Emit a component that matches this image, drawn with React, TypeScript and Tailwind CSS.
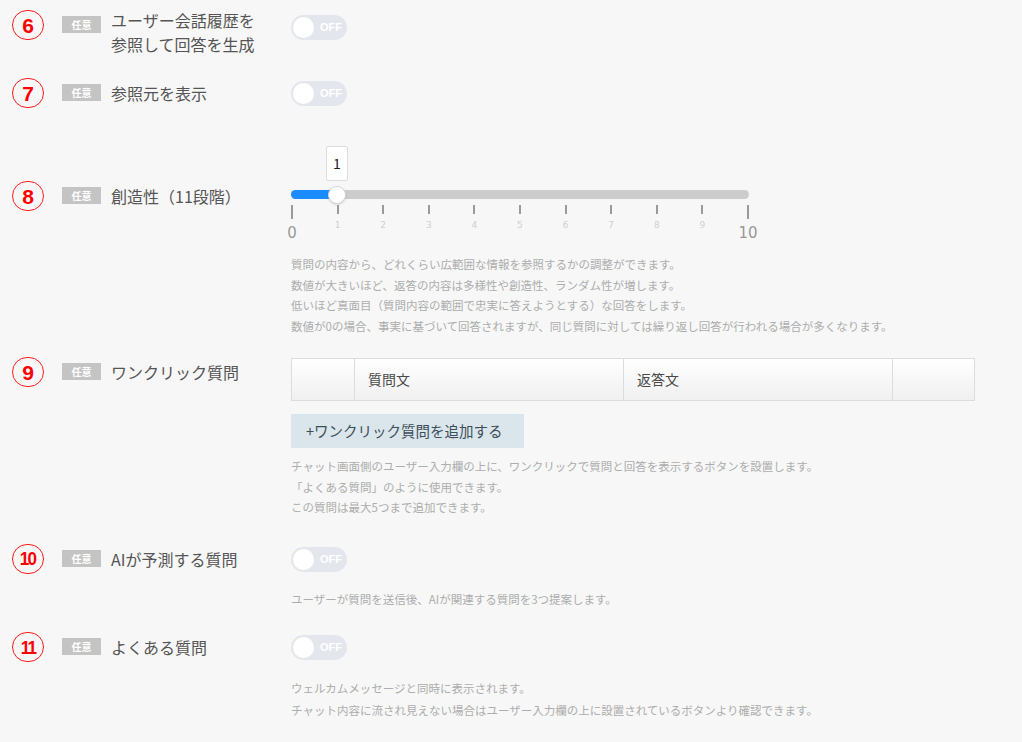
import React from 'react';

const FONT = { fontFamily: '"Noto Sans CJK JP", "Noto Sans", "Liberation Sans", sans-serif' };

const Num = ({ n }: { n: number }) => (
  <div className="w-[32px] h-[30px] flex-shrink-0 rounded-full border-[1.5px] border-[#ff1a1a] flex items-center justify-center">
    <span
      className={`font-bold text-[#ff0000] leading-none ${n >= 10 ? 'text-[19px] tracking-[-2px] scale-x-90' : 'text-[21px]'}`}
      style={{ fontFamily: '"Liberation Sans", Arial, sans-serif' }}
    >
      {n}
    </span>
  </div>
);

const Head = ({ n, label, multi }: { n: number; label: React.ReactNode; multi?: boolean }) => (
  <div className="flex items-start w-[279px] flex-shrink-0">
    <Num n={n} />
    <span className="ml-[18px] mt-[6px] w-[39px] h-[17px] bg-[#c4c4c4] text-white text-[10px] font-bold flex items-center justify-center flex-shrink-0">
      任意
    </span>
    <div className={`ml-[10px] text-[16px] text-[#555] ${multi ? '-mt-[2px] leading-[24px]' : 'mt-[4px] leading-[22px]'}`}>{label}</div>
  </div>
);

const Toggle = () => (
  <div className="w-[56px] h-[25px] rounded-full bg-[#e4e6ed] flex items-center pl-[2px] pr-[5px] justify-between">
    <div className="w-[21px] h-[21px] rounded-full bg-white" />
    <span className="text-white text-[11px] font-bold" style={{ fontFamily: '"Liberation Sans", Arial, sans-serif' }}>
      OFF
    </span>
  </div>
);

const Desc = ({ lines, lh = 'leading-[20.5px]' }: { lines: string[]; lh?: string }) => (
  <div className={`text-[11.5px] text-[#adadad] ${lh}`}>
    {lines.map((l) => (
      <div key={l}>{l}</div>
    ))}
  </div>
);

const Slider = ({ value }: { value: number }) => {
  const pct = (value / 10) * 100;
  return (
    <div className="w-[458px] relative">
      <div className="relative h-[40px]">
        <div
          className="absolute top-0 w-[22px] h-[35px] -translate-x-1/2 bg-white border border-[#ddd] rounded-[2px] flex items-center justify-center text-[14px] text-[#222]"
          style={{ left: `${pct}%` }}
        >
          {value}
        </div>
      </div>
      <div className="relative h-[18px]">
        <div className="absolute left-0 right-0 top-[4px] h-[9px] rounded-full bg-[#cccccc]" />
        <div className="absolute left-0 top-[4px] h-[9px] rounded-l-full bg-[#1a8cff]" style={{ width: `${pct}%` }} />
        <div
          className="absolute top-0 w-[18px] h-[18px] -translate-x-1/2 rounded-full bg-white border border-[#d6d6d6] shadow-sm"
          style={{ left: `${pct}%` }}
        />
      </div>
      <div className="flex justify-between px-[1px] pt-[1px]">
        {Array.from({ length: 11 }, (_, i) => {
          const end = i === 0 || i === 10;
          return (
            <div key={i} className="w-0 flex flex-col items-center">
              <div className={`w-[2px] bg-[#9a9a9a] ${end ? 'h-[14px]' : 'h-[9px]'}`} />
              {end ? (
                <span className="mt-[6px] text-[15px] leading-[16px] text-[#999]" style={{ fontFamily: '"DejaVu Sans", sans-serif' }}>
                  {i}
                </span>
              ) : (
                <span className="mt-[6px] text-[9px] leading-[10px] text-[#cfcfcf]" style={{ fontFamily: '"DejaVu Sans", sans-serif' }}>
                  {i}
                </span>
              )}
            </div>
          );
        })}
      </div>
    </div>
  );
};

export default function App() {
  return (
    <div className="w-[1022px] h-[742px] bg-[#f7f7f7] overflow-hidden pl-[12px] pt-[10px]" style={FONT}>
      {/* 6 */}
      <div className="flex items-start">
        <Head n={6} multi label={<>ユーザー会話履歴を<br />参照して回答を生成</>} />
        <div className="mt-[5px]"><Toggle /></div>
      </div>

      {/* 7 */}
      <div className="flex items-start mt-[22px]">
        <Head n={7} label="参照元を表示" />
        <div className="mt-[3px]"><Toggle /></div>
      </div>

      {/* 8 */}
      <div className="flex items-start mt-[38px]">
        <div className="mt-[35px]">
          <Head n={8} label="創造性（11段階）" />
        </div>
        <div>
          <Slider value={1} />
          <div className="mt-[13px]">
            <Desc
              lines={[
                '質問の内容から、どれくらい広範囲な情報を参照するかの調整ができます。',
                '数値が大きいほど、返答の内容は多様性や創造性、ランダム性が増します。',
                '低いほど真面目（質問内容の範囲で忠実に答えようとする）な回答をします。',
                '数値が0の場合、事実に基づいて回答されますが、同じ質問に対しては繰り返し回答が行われる場合が多くなります。',
              ]}
            />
          </div>
        </div>
      </div>

      {/* 9 */}
      <div className="flex items-start mt-[21px]">
        <Head n={9} label="ワンクリック質問" />
        <div className="mt-[1px]">
          <div className="w-[684px] h-[43px] flex border border-[#dcdcdc] bg-gradient-to-b from-white to-[#f0f0f0]">
            <div className="w-[63px] border-r border-[#dcdcdc]" />
            <div className="w-[269px] border-r border-[#dcdcdc] flex items-center pl-[13px] text-[14px] text-[#4a4a4a]">質問文</div>
            <div className="w-[269px] border-r border-[#dcdcdc] flex items-center pl-[13px] text-[14px] text-[#4a4a4a]">返答文</div>
            <div className="flex-1" />
          </div>
          <div className="mt-[13px] w-[233px] h-[34px] bg-[#dae6eb] flex items-center pl-[15px] text-[14.5px] text-[#3c4e5a]">
            +ワンクリック質問を追加する
          </div>
          <div className="mt-[8px]">
            <Desc
              lines={[
                'チャット画面側のユーザー入力欄の上に、ワンクリックで質問と回答を表示するボタンを設置します。',
                '「よくある質問」のように使用できます。',
                'この質問は最大5つまで追加できます。',
              ]}
            />
          </div>
        </div>
      </div>

      {/* 10 */}
      <div className="flex items-start mt-[26px]">
        <Head n={10} label="AIが予測する質問" />
        <div className="mt-[3px]">
          <Toggle />
          <div className="mt-[17px]">
            <Desc lines={['ユーザーが質問を送信後、AIが関連する質問を3つ提案します。']} />
          </div>
        </div>
      </div>

      {/* 11 */}
      <div className="flex items-start mt-[23px]">
        <Head n={11} label="よくある質問" />
        <div className="mt-[3px]">
          <Toggle />
          <div className="mt-[17px]">
            <Desc
              lh="leading-[22px]"
              lines={[
                'ウェルカムメッセージと同時に表示されます。',
                'チャット内容に流され見えない場合はユーザー入力欄の上に設置されているボタンより確認できます。',
              ]}
            />
          </div>
        </div>
      </div>
    </div>
  );
}
